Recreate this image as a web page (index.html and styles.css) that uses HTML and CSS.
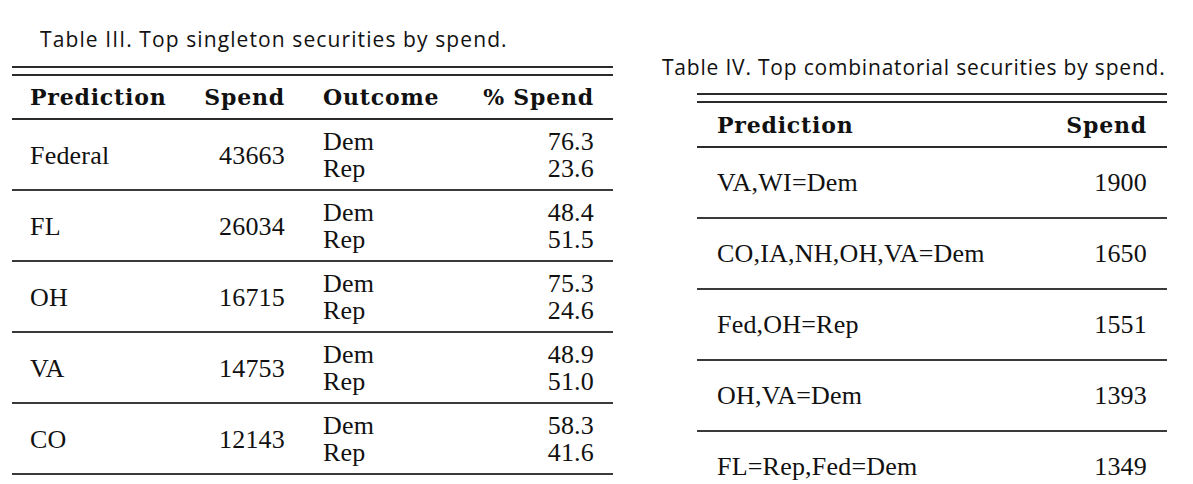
FILE: index.html
```html
<!DOCTYPE html>
<html>
<head>
<meta charset="utf-8">
<link rel="stylesheet" href="styles.css">
</head>
<body>
<div class="page">
  <section class="block block-left">
    <div class="caption">Table III. Top singleton securities by spend.</div>
    <div class="double-rule"></div>
    <table class="tbl tbl-single">
      <colgroup>
        <col class="c-pred"><col class="c-spend"><col class="c-out"><col class="c-pct">
      </colgroup>
      <thead>
        <tr><th class="l pl">Prediction</th><th class="r">Spend</th><th class="l po">Outcome</th><th class="r pr">% Spend</th></tr>
      </thead>
      <tbody>
        <tr><td class="l pl">Federal</td><td class="r">43663</td><td class="l po"><div>Dem</div><div>Rep</div></td><td class="r pr"><div>76.3</div><div>23.6</div></td></tr>
        <tr><td class="l pl">FL</td><td class="r">26034</td><td class="l po"><div>Dem</div><div>Rep</div></td><td class="r pr"><div>48.4</div><div>51.5</div></td></tr>
        <tr><td class="l pl">OH</td><td class="r">16715</td><td class="l po"><div>Dem</div><div>Rep</div></td><td class="r pr"><div>75.3</div><div>24.6</div></td></tr>
        <tr><td class="l pl">VA</td><td class="r">14753</td><td class="l po"><div>Dem</div><div>Rep</div></td><td class="r pr"><div>48.9</div><div>51.0</div></td></tr>
        <tr><td class="l pl">CO</td><td class="r">12143</td><td class="l po"><div>Dem</div><div>Rep</div></td><td class="r pr"><div>58.3</div><div>41.6</div></td></tr>
      </tbody>
    </table>
  </section>
  <section class="block block-right">
    <div class="caption">Table IV. Top combinatorial securities by spend.</div>
    <div class="inner">
      <div class="double-rule"></div>
      <table class="tbl tbl-combo">
        <thead>
          <tr><th class="l pl2">Prediction</th><th class="r pr2">Spend</th></tr>
        </thead>
        <tbody>
          <tr><td class="l pl2">VA,WI=Dem</td><td class="r pr2">1900</td></tr>
          <tr><td class="l pl2">CO,IA,NH,OH,VA=Dem</td><td class="r pr2">1650</td></tr>
          <tr><td class="l pl2">Fed,OH=Rep</td><td class="r pr2">1551</td></tr>
          <tr><td class="l pl2">OH,VA=Dem</td><td class="r pr2">1393</td></tr>
          <tr><td class="l pl2">FL=Rep,Fed=Dem</td><td class="r pr2">1349</td></tr>
        </tbody>
      </table>
    </div>
  </section>
</div>
</body>
</html>
```

FILE: styles.css
```css
html, body {
  margin: 0;
  padding: 0;
  background: #ffffff;
  overflow: hidden;
}

body {
  width: 1193px;
  height: 484px;
  color: #111111;
}

.page {
  display: flex;
  align-items: flex-start;
}

.block-left {
  margin-left: 12px;
  width: 601px;
  padding-top: 27px;
}

.block-right {
  margin-left: 49px;
  width: 506px;
  padding-top: 55px;
}

.block-right .inner {
  margin-left: 35px;
  width: 470px;
}

.caption {
  font-family: "Open Sans", "Liberation Sans", sans-serif;
  font-size: 21px;
  line-height: 24px;
  letter-spacing: 0.8px;
  white-space: nowrap;
  color: #111111;
}

.block-left .caption {
  margin-left: 28px;
  margin-bottom: 15px;
  letter-spacing: 1.1px;
}

.block-right .caption {
  margin-bottom: 14px;
}

.double-rule {
  height: 6px;
  border-top: 2px solid #2b2b2b;
  border-bottom: 2px solid #2b2b2b;
}

.tbl {
  width: 100%;
  border-collapse: separate;
  border-spacing: 0;
  table-layout: fixed;
  font-family: "Liberation Serif", "Times New Roman", serif;
  font-size: 26px;
  letter-spacing: 0.2px;
  color: #111111;
}

.tbl th {
  font-family: "DejaVu Serif", serif;
  font-weight: bold;
  font-size: 22px;
  letter-spacing: 0.8px;
  line-height: 26px;
  padding: 8px 0 8px 0;
  border-bottom: 2px solid #2b2b2b;
  white-space: nowrap;
}

.tbl-combo th {
  padding-top: 9px;
}

.tbl td {
  line-height: 27px;
  padding: 8px 0 7px 0;
  border-bottom: 2px solid #3a3a3a;
  vertical-align: middle;
  white-space: nowrap;
}

.tbl-combo td {
  padding: 21px 0 21px 0;
}

.l { text-align: left; }
.r { text-align: right; }

.c-pred { width: 188px; }
.c-spend { width: 85px; }
.c-out { width: 175px; }
.c-pct { width: 153px; }

.tbl .pl { padding-left: 18px; }
.tbl .po { padding-left: 38px; }
.tbl .pr { padding-right: 19px; }
.tbl .pl2 { padding-left: 20px; }
.tbl .pr2 { padding-right: 20px; }
```
